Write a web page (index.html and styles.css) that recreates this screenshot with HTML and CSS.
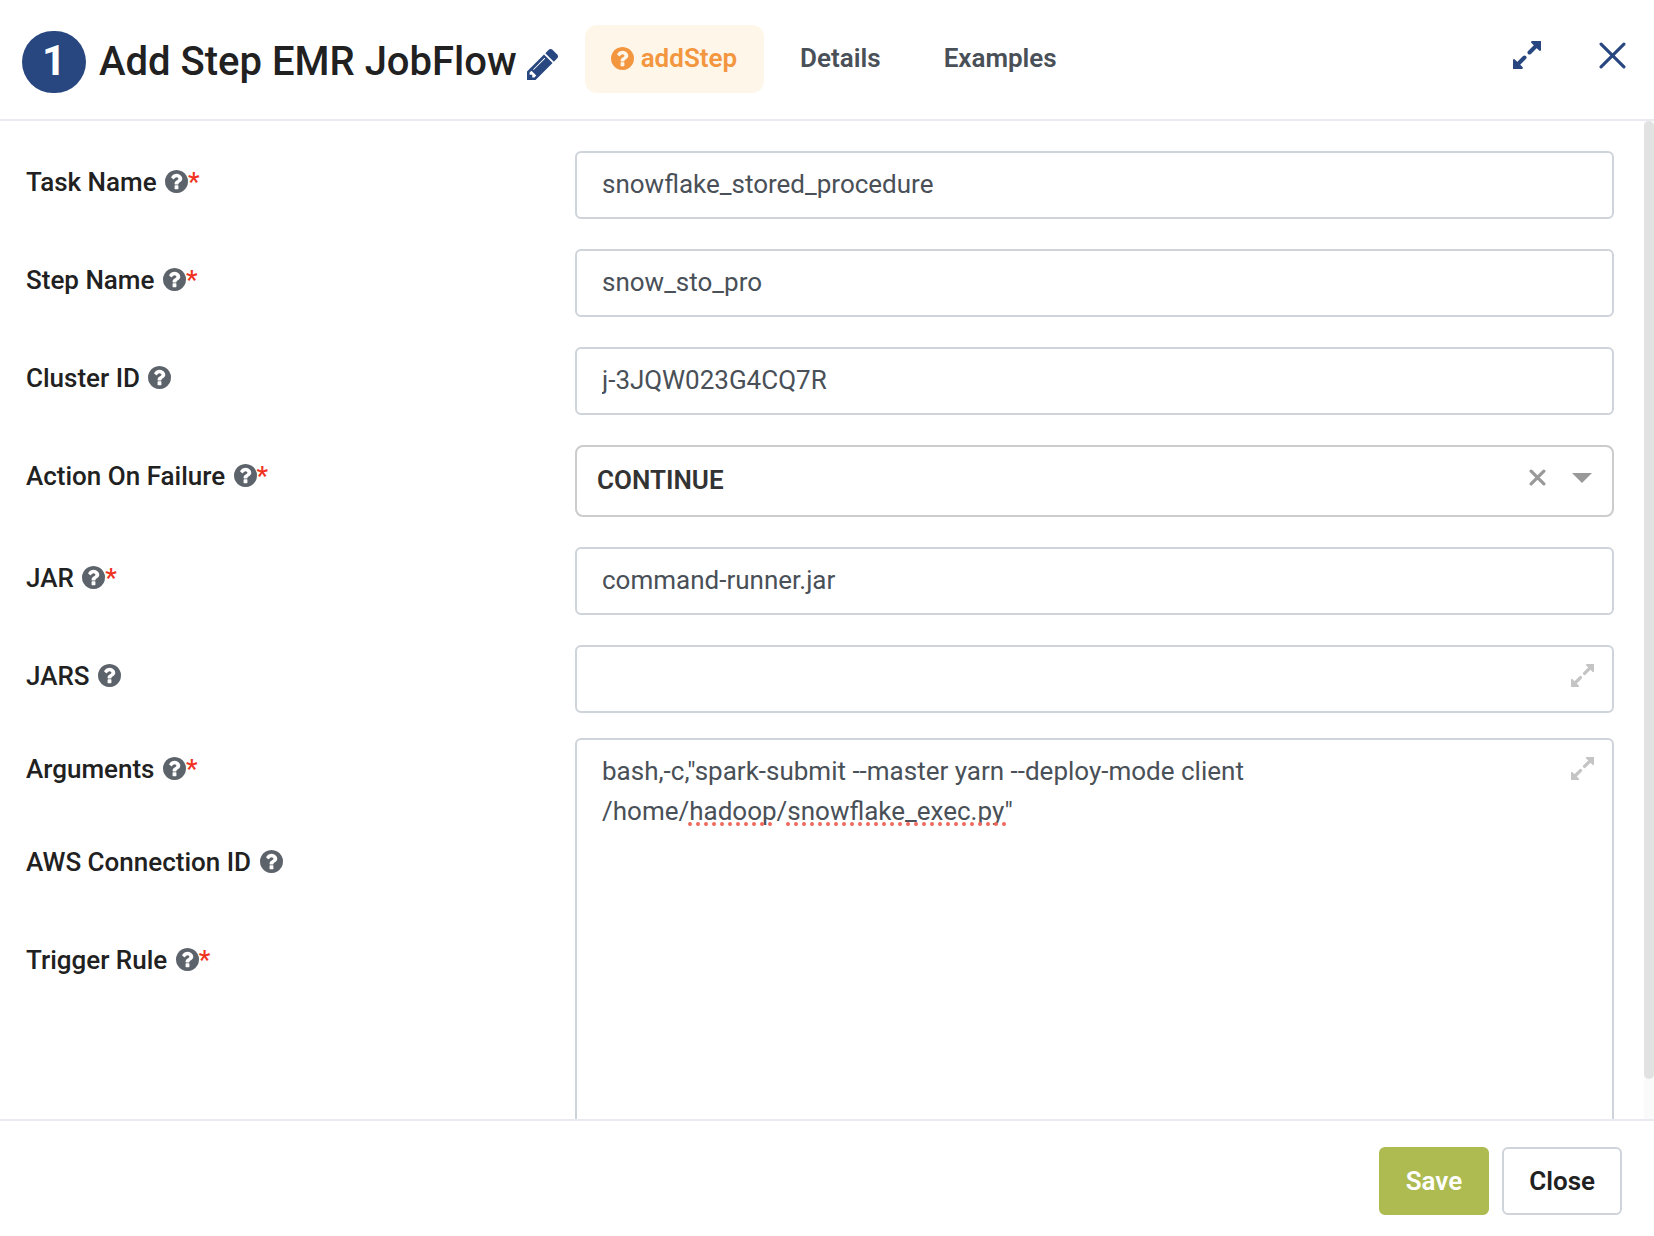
FILE: index.html
```html
<!DOCTYPE html>
<html lang="en">
<head>
<meta charset="utf-8">
<meta name="viewport" content="width=device-width, initial-scale=1">
<title>Add Step EMR JobFlow</title>
<link rel="stylesheet" href="styles.css">
</head>
<body>
<svg class="sprite" aria-hidden="true">
  <symbol id="help" viewBox="128 128 1536 1536"><path d="M1024 1376v-192q0-14-9-23t-23-9h-192q-14 0-23 9t-9 23v192q0 14 9 23t23 9h192q14 0 23-9t9-23zm256-672q0-88-55.5-163t-138.5-116-170-41q-243 0-371 213-15 24 8 42l132 100q7 6 19 6 16 0 25-12 53-68 86-92 34-24 86-24 48 0 85.5 26t37.5 59q0 38-20 61t-68 45q-63 28-115.5 86.500t-52.5 125.500v36q0 14 9 23t23 9h192q14 0 23-9t9-23q0-19 21.500-49.500t54.500-49.500q32-18 49-28.500t46-35 44.500-48 28-60.500 12.500-81zm384 192q0 209-103 385.500t-279.500 279.500-385.500 103-385.500-103-279.500-279.500-103-385.500 103-385.500 279.500-279.500 385.500-103 385.500 103 279.500 279.500 103 385.500z"/></symbol>
  <symbol id="pencil" viewBox="128 149 1515 1515"><path d="M491 1536l91-91-235-235-91 91v107h128v128h107zm523-928q0-22-22-22-10 0-17 7l-542 542q-7 7-7 17 0 22 22 22 10 0 17-7l542-542q7-7 7-17zm-54-192l416 416-832 832h-416v-416zm683 96q0 53-37 90l-166 166-416-416 166-165q36-38 90-38 53 0 91 38l235 234q37 39 37 91z"/></symbol>
  <symbol id="expand" viewBox="0 0 28 28"><path d="M19 0H28V9q-.6 1.600-1.900.5L18.500 1.900Q17.400.6 19 0zM9 28H0V19q.6-1.600 1.900-.5L9.500 26.100Q10.600 27.400 9 28z"/><path d="M23 5L16.500 11.500M5 23L11.500 16.500" fill="none" stroke="currentColor" stroke-width="4" stroke-linecap="round"/></symbol>
</svg>
<div class="dialog" role="dialog" aria-labelledby="title">
  <header class="header">
    <div class="heading">
      <span class="badge">1</span>
      <h1 class="title" id="title">Add Step EMR JobFlow</h1>
      <button class="icon-button" type="button" aria-label="Edit name"><svg class="pencil"><use href="#pencil"/></svg></button>
    </div>
    <nav class="tabs">
      <a class="tab tab-active" href="#addstep"><svg class="help"><use href="#help"/></svg>addStep</a>
      <a class="tab" href="#details">Details</a>
      <a class="tab" href="#examples">Examples</a>
    </nav>
    <div class="window-actions">
      <button class="icon-button" type="button" aria-label="Expand"><svg class="expand"><use href="#expand"/></svg></button>
      <button class="icon-button" type="button" aria-label="Close dialog"><svg class="cross" viewBox="0 0 26 26"><path d="M2 2l22 22M24 2L2 24"/></svg></button>
    </div>
  </header>
  <main class="body">
    <form class="form" id="step-form">
      <label class="label" for="task">Task Name <svg class="help"><use href="#help"/></svg><span class="required">*</span></label>
      <div class="field"><input class="input" id="task" type="text" value="snowflake_stored_procedure"></div>

      <label class="label" for="step">Step Name <svg class="help"><use href="#help"/></svg><span class="required">*</span></label>
      <div class="field"><input class="input" id="step" type="text" value="snow_sto_pro"></div>

      <label class="label" for="cluster">Cluster ID <svg class="help"><use href="#help"/></svg></label>
      <div class="field"><input class="input" id="cluster" type="text" value="j-3JQW023G4CQ7R"></div>

      <label class="label" for="failure">Action On Failure <svg class="help"><use href="#help"/></svg><span class="required">*</span></label>
      <div class="field">
        <select class="input select" id="failure"><option>CONTINUE</option></select>
        <span class="select-icons">
          <svg class="clear" viewBox="0 0 16 16"><path d="M2 2l12 12M14 2L2 14"/></svg>
          <svg class="caret" viewBox="0 0 20 10"><path d="M0 0h20L10 10z"/></svg>
        </span>
      </div>

      <label class="label" for="jar">JAR <svg class="help"><use href="#help"/></svg><span class="required">*</span></label>
      <div class="field"><input class="input" id="jar" type="text" value="command-runner.jar"></div>

      <label class="label" for="jars">JARS <svg class="help"><use href="#help"/></svg></label>
      <div class="field field-area">
        <textarea class="input" id="jars"></textarea>
        <button class="icon-button grow" type="button" aria-label="Expand JARS"><svg><use href="#expand"/></svg></button>
      </div>

      <div class="label-stack">
        <label class="label label-area" for="arguments">Arguments <svg class="help"><use href="#help"/></svg><span class="required">*</span></label>
        <span class="label label-row">AWS Connection ID <svg class="help"><use href="#help"/></svg></span>
        <span class="label label-row">Trigger Rule <svg class="help"><use href="#help"/></svg><span class="required">*</span></span>
      </div>
      <div class="field field-tall">
        <textarea class="input tall" id="arguments" spellcheck="false">bash,-c,"spark-submit --master yarn --deploy-mode client
/home/hadoop/snowflake_exec.py"</textarea>
        <svg class="spelling" aria-hidden="true"><path d="M90 2H176M188 2H408"/></svg>
        <button class="icon-button grow" type="button" aria-label="Expand Arguments"><svg><use href="#expand"/></svg></button>
      </div>
    </form>
    <div class="scrollbar" aria-hidden="true"><div class="thumb"></div></div>
  </main>
  <footer class="footer">
    <button class="button button-save" type="submit" form="step-form">Save</button>
    <button class="button" type="button">Close</button>
  </footer>
</div>
</body>
</html>
```
FILE: styles.css
```css
* { box-sizing: border-box; }

body {
  margin: 0;
  background: #fff;
  color: #212121;
  font: 400 26px/40px Roboto, sans-serif;
}

svg { fill: currentColor; }
.sprite { display: none; }

.dialog {
  display: flex;
  flex-direction: column;
  height: 100vh;
}

/* Header */
.header {
  display: flex;
  align-items: center;
  padding: 25px 28px 26px 22px;
  border-bottom: 2px solid #e9eaef;
}

.heading {
  display: flex;
  align-items: center;
  padding-top: 5px;
}

.badge {
  width: 64px;
  height: 62px;
  border-radius: 32px;
  background: #28467f;
  color: #fff;
  font-size: 42px;
  font-weight: 700;
  line-height: 60px;
  text-align: center;
}

.title {
  margin: 0 10px 0 13px;
  font-size: 40px;
  font-weight: 500;
  line-height: 48px;
}

.icon-button {
  display: flex;
  padding: 0;
  border: 0;
  background: none;
  color: #28467f;
  cursor: pointer;
}

.pencil {
  width: 31px;
  height: 31px;
  margin-top: 6px;
}

.tabs {
  display: flex;
  gap: 10px;
  margin-left: 27px;
}

.tab {
  display: flex;
  align-items: center;
  gap: 7px;
  height: 68px;
  padding: 0 27px 2px 26px;
  border-radius: 12px;
  color: #495057;
  font-weight: 600;
  text-decoration: none;
}

.tab-active {
  background: #fff6ea;
  color: #f39640;
}

.help {
  width: 23px;
  height: 23px;
}

.window-actions {
  display: flex;
  align-items: center;
  gap: 58px;
  margin: 0 0 8px auto;
}

.expand {
  width: 28px;
  height: 28px;
}

.cross {
  width: 27px;
  height: 27px;
  fill: none;
  stroke: currentColor;
  stroke-width: 3;
  stroke-linecap: round;
}

/* Form */
.body {
  display: flex;
  flex: 1;
  min-height: 0;
  overflow: hidden;
}

.form {
  display: grid;
  flex: 1;
  grid-template-columns: 1fr 2fr;
  align-content: start;
  padding-top: 30px;
}

.label {
  padding: 11px 0 0 26px;
  font-weight: 500;
}

.label .help {
  margin-left: 2px;
  color: #5c636b;
  vertical-align: -2px;
}

.label-stack {
  display: flex;
  flex-direction: column;
}

.label-area { height: 93px; }
.label-row { height: 98px; }
.required { color: #f0321e; }

.field {
  position: relative;
  padding: 0 30px 30px 27px;
}

.field-area { padding-bottom: 25px; }
.field-tall { padding-bottom: 0; }

.input {
  display: block;
  width: 100%;
  height: 68px;
  padding: 0 25px 2px;
  border: 2px solid #ced4da;
  border-radius: 6px;
  background: #fff;
  color: #495057;
  font: inherit;
  resize: none;
  outline: 0;
}

.select {
  height: 72px;
  padding: 0 20px 2px;
  border-color: #ccc;
  border-radius: 8px;
  color: #333;
  font-weight: 600;
  appearance: none;
}

.select-icons {
  position: absolute;
  top: 24px;
  right: 52px;
  display: flex;
  align-items: center;
  gap: 26px;
  color: #999;
  pointer-events: none;
}

.clear {
  width: 17px;
  height: 17px;
  fill: none;
  stroke: currentColor;
  stroke-width: 3;
  stroke-linecap: round;
}

.caret {
  width: 20px;
  height: 10px;
}

.tall {
  height: 440px;
  padding-top: 11px;
  overflow: hidden;
}

.spelling {
  position: absolute;
  top: 84px;
  left: 52px;
  width: 420px;
  height: 4px;
  fill: none;
  stroke: #f0685c;
  stroke-width: 4;
  stroke-linecap: round;
  stroke-dasharray: 0 8;
  pointer-events: none;
}

.grow {
  position: absolute;
  top: 19px;
  right: 50px;
  color: #c4c4c4;
}

.grow svg {
  width: 23px;
  height: 23px;
}

.scrollbar {
  width: 10px;
  background: #fafafa;
}

.thumb {
  height: 96%;
  border-radius: 5px;
  background: #e2e2e2;
}

/* Footer */
.footer {
  display: flex;
  justify-content: flex-end;
  gap: 13px;
  padding: 26px 32px 21px;
  border-top: 2px solid #e9eaef;
}

.button {
  height: 68px;
  padding: 0 25px;
  border: 2px solid #ced4da;
  border-radius: 6px;
  background: #fff;
  color: #212121;
  font: inherit;
  font-weight: 600;
  cursor: pointer;
}

.button-save {
  border-color: #adbb51;
  background: #adbb51;
  color: #fff;
}
```
